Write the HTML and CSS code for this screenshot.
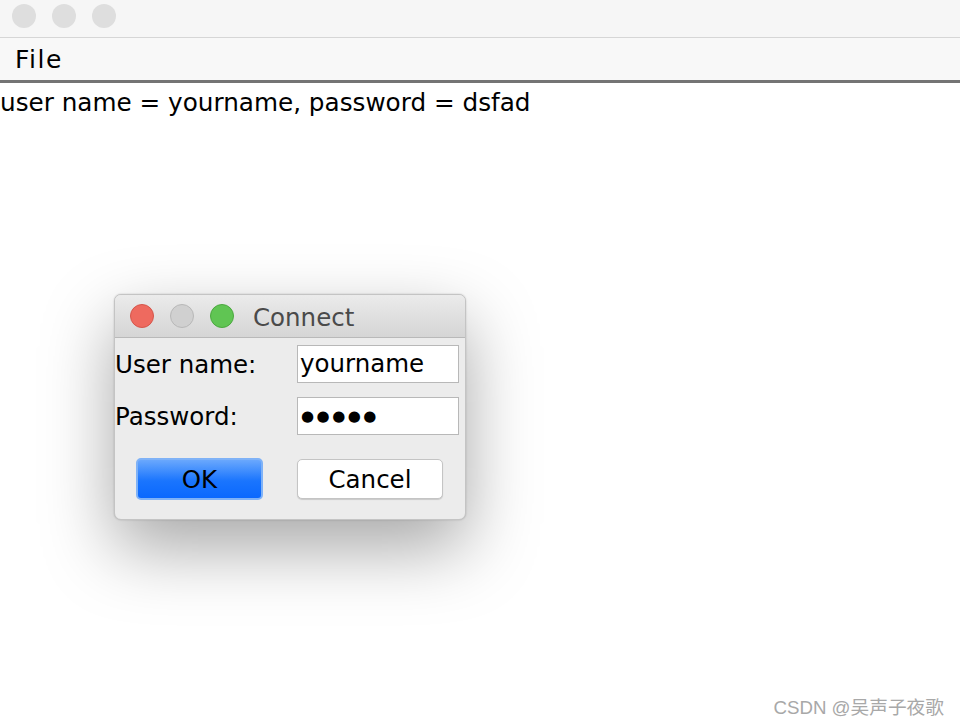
FILE: index.html
```html
<!DOCTYPE html>
<html lang="en">
<head>
    <meta charset="UTF-8">
    <title>Connect</title>
    <link rel="stylesheet" href="styles.css">
</head>
<body>
    <div class="titlebar">
        <span class="light"></span>
        <span class="light"></span>
        <span class="light"></span>
    </div>
    <div class="menubar">
        <span class="menu">File</span>
    </div>
    <div class="content">
        <p class="output">user name = yourname, password = dsfad</p>

        <div class="dialog">
            <div class="dialog-title">
                <span class="dot red"></span>
                <span class="dot gray"></span>
                <span class="dot green"></span>
                <span class="caption">Connect</span>
            </div>
            <div class="dialog-body">
                <div class="row">
                    <label for="user">User name:</label>
                    <div class="field" id="user">yourname</div>
                </div>
                <div class="row">
                    <label for="pass">Password:</label>
                    <div class="field dots" id="pass">●●●●●</div>
                </div>
                <div class="buttons">
                    <button class="btn ok">OK</button>
                    <button class="btn cancel">Cancel</button>
                </div>
            </div>
        </div>

        <div class="watermark">CSDN @吴声子夜歌</div>
    </div>
</body>
</html>
```

FILE: styles.css
```css
html, body {
    margin: 0;
    padding: 0;
    height: 100%;
}

body {
    font-family: "DejaVu Sans", "Noto Sans CJK SC", sans-serif;
    background-color: #fff;
    color: #000;
}

.titlebar {
    height: 38px;
    background-color: #f6f6f6;
    border-bottom: 1px solid #d6d6d6;
    display: flex;
    align-items: flex-start;
    gap: 16px;
    padding: 4px 0 0 12px;
    box-sizing: border-box;
}

.light {
    width: 24px;
    height: 24px;
    border-radius: 50%;
    background-color: #dedede;
}

.menubar {
    height: 42px;
    background-color: #f8f8f8;
    border-bottom: 3px solid #747474;
    display: flex;
    align-items: center;
    padding-left: 15px;
}

.menu {
    font-size: 25px;
    letter-spacing: 1.5px;
    margin-top: 1px;
}

.content {
    position: relative;
    height: 643px;
}

.output {
    margin: 0;
    font-size: 24.7px;
    line-height: 40px;
}

.dialog {
    position: absolute;
    left: 114px;
    top: 211px;
    width: 352px;
    height: 226px;
    border-radius: 7px;
    background-color: #ececec;
    border: 1px solid #c4c4c4;
    box-sizing: border-box;
    box-shadow: 0 28px 70px rgba(0, 0, 0, 0.35), 0 0 2px rgba(0, 0, 0, 0.2);
    overflow: hidden;
}

.dialog-title {
    height: 43px;
    background: linear-gradient(#ebebeb, #d5d5d5);
    border-bottom: 1px solid #b9b9b9;
    display: flex;
    align-items: center;
    padding-left: 15px;
    box-sizing: border-box;
}

.dot {
    width: 24px;
    height: 24px;
    border-radius: 50%;
    box-sizing: border-box;
    margin-right: 16px;
}

.red {
    background-color: #ee6a5f;
    border: 1px solid #d5564b;
}

.gray {
    background-color: #d0d0d0;
    border: 1px solid #b8b8b8;
}

.green {
    background-color: #60c553;
    border: 1px solid #4ba83f;
}

.caption {
    font-size: 24.5px;
    color: #4a4a4a;
    margin-left: 3px;
    margin-top: 2px;
}

.dialog-body {
    padding: 7px 6px 0 0;
}

.row {
    display: flex;
    align-items: center;
    height: 38px;
    margin-bottom: 14px;
}

label {
    width: 182px;
    font-size: 24.5px;
}

.field {
    width: 162px;
    height: 38px;
    box-sizing: border-box;
    border: 1px solid #b8b8b8;
    background-color: #fff;
    font-size: 24.5px;
    line-height: 36px;
    padding-left: 2px;
}

.dots {
    font-size: 15px;
    letter-spacing: 2.5px;
    padding-left: 3px;
}

.buttons {
    display: flex;
    align-items: center;
    margin-top: 23px;
}

.btn {
    font-family: "DejaVu Sans", sans-serif;
    font-size: 24.5px;
    color: #000;
    border-radius: 5px;
    padding: 0;
    box-sizing: border-box;
}

.ok {
    width: 127px;
    height: 42px;
    margin-left: 21px;
    background: linear-gradient(#6aa8fd, #1a75fe 55%, #0a68fe);
    border: 2px solid #7fb2f7;
}

.cancel {
    width: 146px;
    height: 40px;
    margin-left: 34px;
    background-color: #fff;
    border: 1px solid #c4c4c4;
    box-shadow: 0 1px 1px rgba(0, 0, 0, 0.15);
}

.watermark {
    position: absolute;
    right: 16px;
    bottom: 7px;
    font-family: "Liberation Sans", "Noto Sans CJK SC", sans-serif;
    font-size: 18.7px;
    color: #a8a8a8;
}
```
